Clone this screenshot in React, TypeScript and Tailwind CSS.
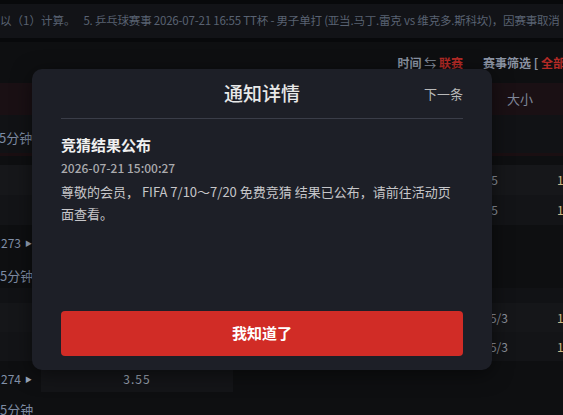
import React from "react";

const font = { fontFamily: '"Noto Sans CJK SC", "Noto Sans", sans-serif' };

export default function App() {
  return (
    <div
      className="relative w-[563px] h-[415px] overflow-hidden bg-[#0e0f11] text-[#7d8ba3]"
      style={font}
    >
      <div className="flex flex-col">
        <div className="h-[4px] bg-[#08090b]" />
        <div className="h-[34px] bg-[#121317] flex items-center whitespace-nowrap text-[11.5px] text-[#596272] overflow-hidden">
          <span>以（1）计算。</span>
          <span className="ml-[8px] tracking-[-0.2px]">
            5. 乒乓球赛事 2026-07-21 16:55 TT杯 - 男子单打 (亚当.马丁.雷克 vs 维克多.斯科坎)，因赛事取消
          </span>
        </div>
        <div className="h-[4px] bg-[#08090b]" />
        <div className="h-[41px] flex items-center justify-end whitespace-nowrap text-[12px] font-bold gap-[20px]">
          <span className="text-[#8a93a3]">
            时间 <span className="font-normal">⇆</span> <span className="text-[#b32a26]">联赛</span>
          </span>
          <span className="text-[#8a93a3] mr-[-2px]">
            赛事筛选 [ <span className="text-[#b32a26]">全部</span>
          </span>
        </div>
        <div className="h-[32px] bg-[#1a1014] flex items-center justify-end pr-[30px] text-[13px] text-[#7f8799]">
          大小
        </div>
        <div className="h-[38px] bg-[#111215] flex items-end pb-[6px] text-[13px]">
          <span className="ml-[-1px]">5分钟</span>
        </div>
        <div className="h-[3px] bg-[#1a0f12]" />
        <div className="h-[9px]" />
        <div className="h-[30px] bg-[#16171a] flex items-center text-[12px] whitespace-nowrap">
          <span className="shrink-0 ml-[470px] w-[28px] text-right text-[#8a909b]">2.5</span>
          <span className="shrink-0 ml-[59px] text-[#c9b889]">1.85</span>
        </div>
        <div className="h-[30px] bg-[#131417] flex items-center text-[12px] whitespace-nowrap">
          <span className="shrink-0 ml-[470px] w-[28px] text-right text-[#8a909b]">2.5</span>
          <span className="shrink-0 ml-[59px] text-[#c9b889]">1.92</span>
        </div>
        <div className="h-[63px] flex flex-col text-[12px]">
          <span className="mt-[9px] ml-[1px] flex items-center gap-[4px] text-[#8290a8]">
            273 <span className="text-[7px] text-[#9aa6bb]">▶</span>
          </span>
          <span className="mt-[14px] text-[13px]">5分钟</span>
        </div>
        <div className="h-[15px] bg-[#111215]" />
        <div className="h-[29px] bg-[#151619] flex items-center text-[12px] whitespace-nowrap">
          <span className="shrink-0 ml-[460px] w-[48px] text-right text-[#8a909b]">2.5/3</span>
          <span className="shrink-0 ml-[49px] text-[#c9b889]">1.85</span>
        </div>
        <div className="h-[29px] bg-[#131417] flex items-center text-[12px] whitespace-nowrap">
          <span className="shrink-0 ml-[460px] w-[48px] text-right text-[#8a909b]">2.5/3</span>
          <span className="shrink-0 ml-[49px] text-[#c9b889]">1.92</span>
        </div>
        <div className="flex flex-col">
          <div className="flex items-center mt-[5px] h-[26px]">
            <span className="w-[40px] ml-[1px] flex items-center gap-[4px] text-[12px] text-[#8290a8]">
              274 <span className="text-[7px] text-[#9aa6bb]">▶</span>
            </span>
            <div className="w-[192px] h-[26px] bg-[#141518] flex items-center justify-center text-[12px] text-[#9aa3b1] tracking-[1px]">
              3.55
            </div>
          </div>
          <span className="mt-[8px] text-[13px]">5分钟</span>
        </div>
      </div>

      <div className="absolute left-[32px] top-[69px] w-[460px] h-[301px] rounded-[10px] bg-[#1d1f27] shadow-[0_4px_20px_rgba(0,0,0,0.5)] px-[29px] pb-[14px] flex flex-col">
        <div className="relative h-[49px] flex items-center justify-center">
          <span className="text-[19px] font-medium text-[#e8e8e8]">通知详情</span>
          <span className="absolute right-0 text-[13px] text-[#b8b8b8]">下一条</span>
        </div>
        <div className="h-px bg-[#3a3d48]" />
        <div className="mt-[16px] text-[15px] leading-[20px] font-bold text-[#f0f0f0]">竞猜结果公布</div>
        <div className="mt-[4px] text-[12px] leading-[18px] font-medium text-[#ababae]">2026-07-21 15:00:27</div>
        <div className="mt-[4px] text-[13px] leading-[22px] text-[#c6c6c9] whitespace-nowrap">
          尊敬的会员， FIFA 7/10～7/20 免费竞猜 结果已公布，请前往活动页
          <br />
          面查看。
        </div>
        <button className="mt-auto h-[45px] w-full rounded-[4px] bg-[#d12c26] text-white text-[15px] font-bold">
          我知道了
        </button>
      </div>
    </div>
  );
}
